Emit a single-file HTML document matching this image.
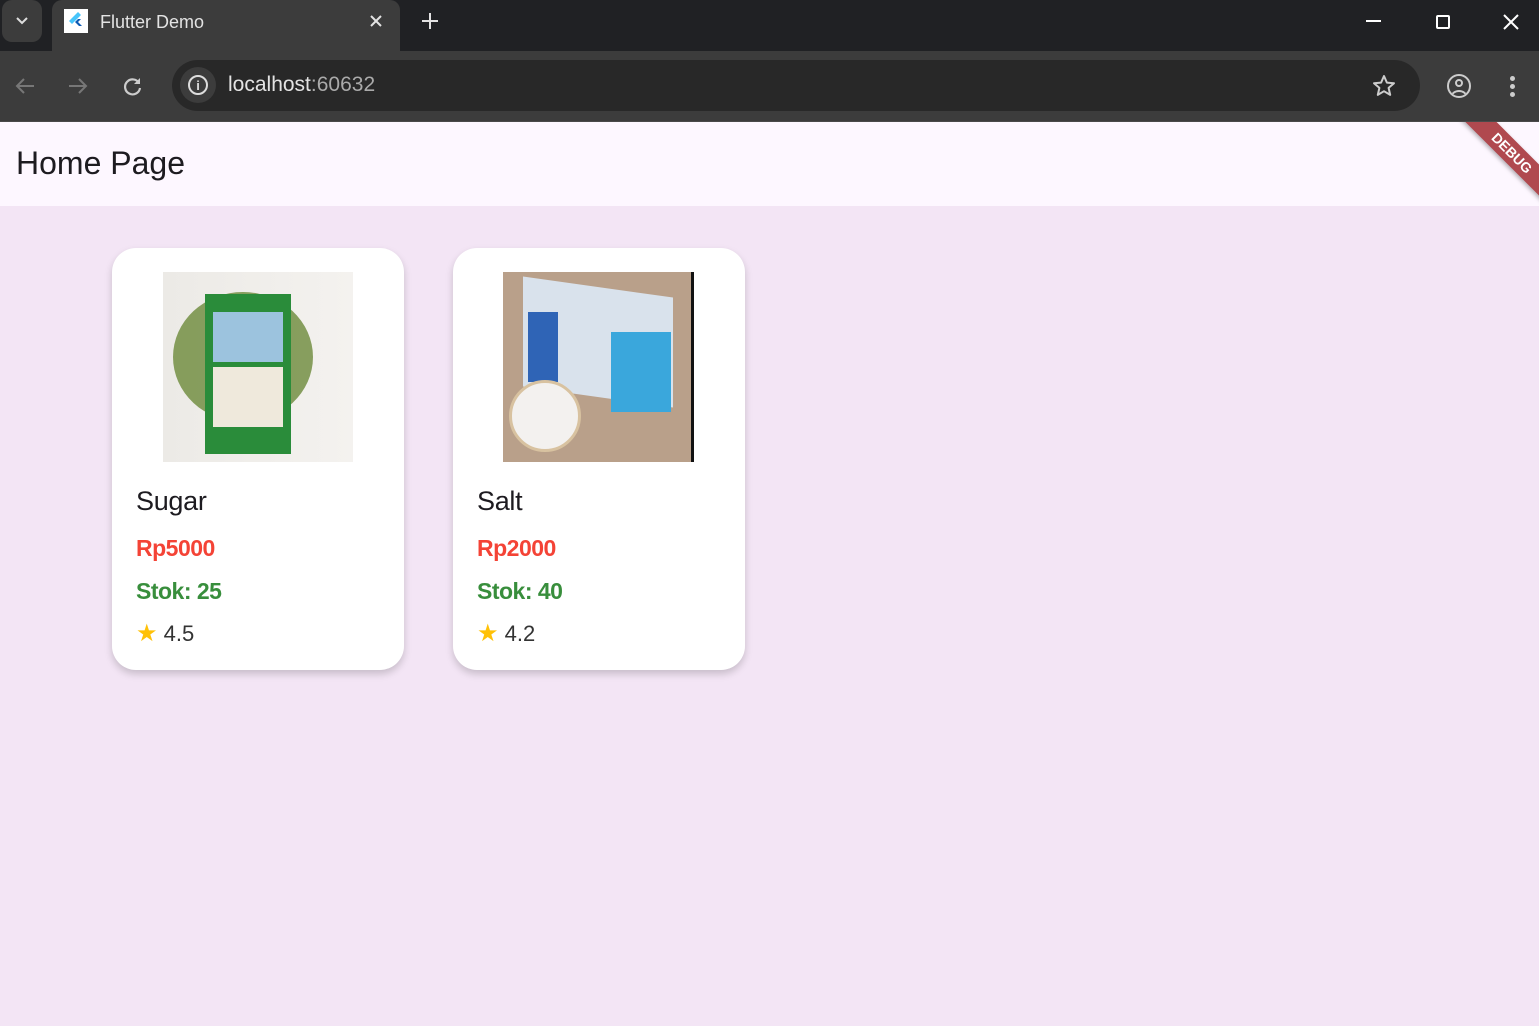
<!DOCTYPE html>
<html><head><meta charset="utf-8"><style>
*{margin:0;padding:0;box-sizing:border-box}
body{width:1539px;height:1026px;overflow:hidden;background:#f3e5f5;font-family:"Liberation Sans",sans-serif;position:relative}
.top{position:absolute;left:0;top:0;width:1539px;height:51px;background:#202124}
.tab{position:absolute;left:52px;top:0;width:348px;height:51px;background:#3c3c3c;border-radius:10px 10px 0 0}
.bar{position:absolute;left:0;top:51px;width:1539px;height:71px;background:#3c3c3c;border-bottom:1px solid #4a4a4a}
.url{position:absolute;left:172px;top:60px;width:1248px;height:51px;background:#282828;border-radius:26px}
.app{position:absolute;left:0;top:122px;width:1539px;height:84px;background:#fdf7ff}
.card{position:absolute;top:248px;width:292px;height:422px;background:#fff;border-radius:24px;box-shadow:0 4px 8px rgba(0,0,0,.18)}
.t{position:absolute;left:24px;font-family:"Liberation Sans",sans-serif}
.name{top:238px;font-size:27px;color:#1d1b20;letter-spacing:-0.3px}
.price{top:287px;font-size:23px;color:#f44336;font-weight:bold;letter-spacing:-0.5px}
.stok{top:330px;font-size:23px;color:#388e3c;font-weight:bold;letter-spacing:-0.5px}
.rate{top:371px;font-size:22px;color:#333}
</style></head><body>
<div class="top"></div>
<div style="position:absolute;left:2px;top:0;width:40px;height:42px;background:#3c3c3c;border-radius:10px"></div>
<svg style="position:absolute;left:14px;top:15px" width="16" height="12"><path d="M3 3l5 5 5-5" stroke="#ddd" stroke-width="2" fill="none"/></svg>
<div class="tab"></div>
<div style="position:absolute;left:64px;top:9px;width:24px;height:24px;background:#fff"></div>
<svg style="position:absolute;left:64px;top:9px" width="24" height="24"><path d="M14 3L5 12l3 3L17 6z" fill="#47c5fb"/><path d="M11 13l4 4h3l-4-4 3-3h-3z" fill="#0c5bb4"/></svg>
<div style="position:absolute;left:100px;top:12px;font-size:18px;color:#e3e3e3">Flutter Demo</div>
<svg style="position:absolute;left:369px;top:14px" width="14" height="14"><path d="M2 2l10 10M12 2L2 12" stroke="#e3e3e3" stroke-width="2"/></svg>
<svg style="position:absolute;left:421px;top:12px" width="18" height="18"><path d="M9 1v16M1 9h16" stroke="#e3e3e3" stroke-width="2"/></svg>
<div style="position:absolute;left:1366px;top:20px;width:15px;height:2px;background:#fff"></div>
<div style="position:absolute;left:1436px;top:15px;width:14px;height:14px;border:2px solid #fff;border-radius:2px"></div>
<svg style="position:absolute;left:1503px;top:14px" width="16" height="16"><path d="M1 1l14 14M15 1L1 15" stroke="#fff" stroke-width="2"/></svg>
<div class="bar"></div>
<svg style="position:absolute;left:14px;top:76px" width="22" height="20"><path d="M20 10H3M10 3l-7 7 7 7" stroke="#777" stroke-width="2" fill="none"/></svg>
<svg style="position:absolute;left:67px;top:76px" width="22" height="20"><path d="M2 10h17M12 3l7 7-7 7" stroke="#777" stroke-width="2" fill="none"/></svg>
<svg style="position:absolute;left:122px;top:75px" width="22" height="22"><path d="M17 8A7.5 7.5 0 1 0 18 13" stroke="#ccc" stroke-width="2.2" fill="none"/><path d="M18 3v6h-6z" fill="#ccc"/></svg>
<div class="url"></div>
<div style="position:absolute;left:180px;top:67px;width:36px;height:36px;background:#3c3c3c;border-radius:50%"></div>
<div style="position:absolute;left:188px;top:75px;width:20px;height:20px;border:2px solid #ddd;border-radius:50%;color:#ddd;font-size:13px;font-weight:bold;text-align:center;line-height:17px">i</div>
<div style="position:absolute;left:228px;top:73px;font-size:21px;color:#e3e3e3">localhost<span style="color:#aaa">:60632</span></div>
<svg style="position:absolute;left:1372px;top:74px" width="24" height="24"><path d="M12 2l2.9 6.6 7.1.6-5.4 4.7 1.6 7-6.2-3.7-6.2 3.7 1.6-7L2 9.2l7.1-.6z" stroke="#ccc" stroke-width="2" fill="none" stroke-linejoin="round"/></svg>
<div style="position:absolute;left:1447px;top:74px;width:24px;height:24px;border:2px solid #ccc;border-radius:50%;overflow:hidden">
<div style="position:absolute;left:6px;top:3px;width:8px;height:8px;border:2px solid #ccc;border-radius:50%"></div>
<div style="position:absolute;left:2px;top:14px;width:16px;height:12px;border:2px solid #ccc;border-radius:50%"></div></div>
<div style="position:absolute;left:1510px;top:76px;width:5px;height:5px;background:#ccc;border-radius:50%;box-shadow:0 8px 0 #ccc,0 16px 0 #ccc"></div>
<div class="app"></div>
<div style="position:absolute;left:16px;top:145px;font-size:32px;color:#1d1b20">Home Page</div>
<div style="position:absolute;left:1439px;top:122px;width:100px;height:90px;overflow:hidden">
<div style="position:absolute;left:8px;top:20px;width:130px;height:22px;background:#b0494f;transform:rotate(45deg);color:#fff;font-size:14px;font-weight:bold;text-align:center;line-height:22px;box-shadow:0 2px 4px rgba(0,0,0,.3)">DEBUG</div></div>
<div class="card" style="left:112px">
<div style="position:absolute;left:51px;top:24px;width:190px;height:190px;background:linear-gradient(90deg,#eceae6,#f4f2ef)">
<div style="position:absolute;left:10px;top:20px;width:140px;height:130px;background:#6c8a3a;border-radius:50%;opacity:.8"></div>
<div style="position:absolute;left:42px;top:22px;width:86px;height:160px;background:#2a8c3a"></div>
<div style="position:absolute;left:50px;top:40px;width:70px;height:50px;background:#9cc3de"></div>
<div style="position:absolute;left:50px;top:95px;width:70px;height:60px;background:#efe9dc"></div>
</div>
<div class="t name">Sugar</div><div class="t price">Rp5000</div><div class="t stok">Stok: 25</div>
<div class="t rate"><span style="color:#ffc107;font-size:24px">★</span> 4.5</div></div>
<div class="card" style="left:453px">
<div style="position:absolute;left:50px;top:24px;width:191px;height:190px;background:#b9a08a;border-right:3px solid #111">
<div style="position:absolute;left:20px;top:15px;width:150px;height:110px;background:#d9e2ec;transform:skewY(8deg)"></div>
<div style="position:absolute;left:25px;top:40px;width:30px;height:70px;background:#2f64b6"></div>
<div style="position:absolute;left:108px;top:60px;width:60px;height:80px;background:#3aa7dc"></div>
<div style="position:absolute;left:6px;top:108px;width:72px;height:72px;background:#f3f1ef;border-radius:50%;border:3px solid #d8c2a0"></div>
</div>
<div class="t name">Salt</div><div class="t price">Rp2000</div><div class="t stok">Stok: 40</div>
<div class="t rate"><span style="color:#ffc107;font-size:24px">★</span> 4.2</div></div>
</body></html>
